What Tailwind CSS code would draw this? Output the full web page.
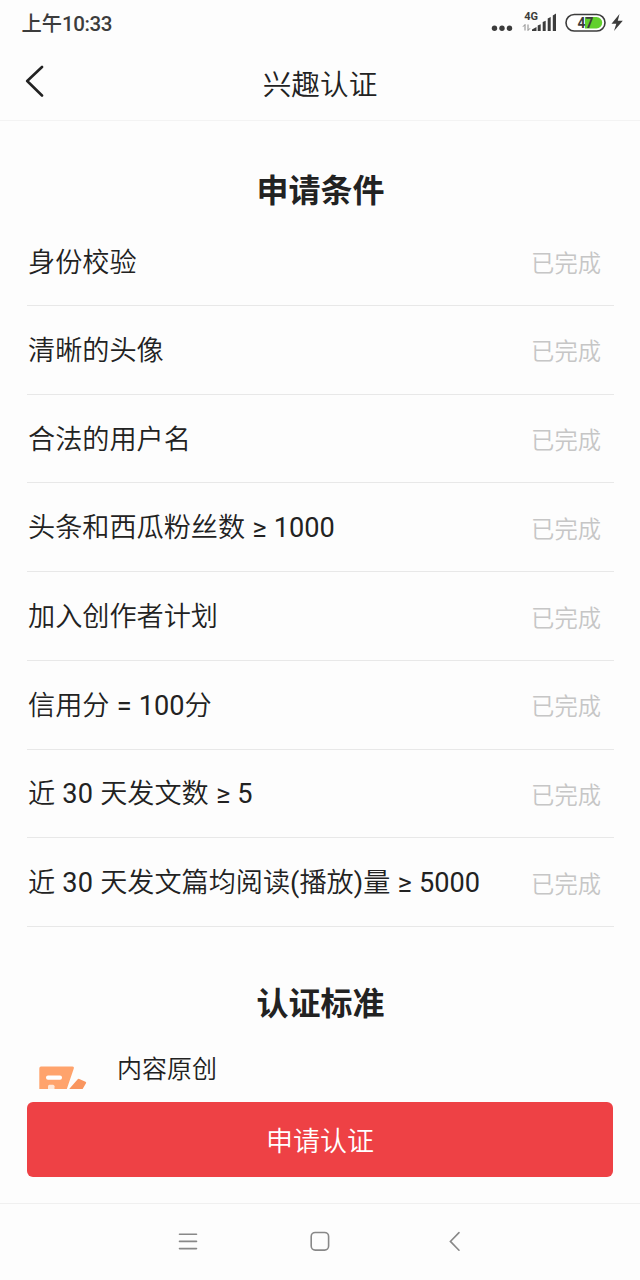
<!DOCTYPE html>
<html lang="zh-CN">
  <head>
    <meta charset="UTF-8" />
    <meta name="viewport" content="width=device-width, initial-scale=1.0" />
    <title>兴趣认证</title>
    <script src="https://cdn.jsdelivr.net/npm/@tailwindcss/browser@4"></script>
  </head>
  <body class="w-[640px] h-[1280px] overflow-hidden flex flex-col bg-[#fdfdfd] text-[#222] font-['Roboto','Noto_Sans_CJK_SC',sans-serif]">

    <!-- status bar -->
    <div class="h-[46px] shrink-0 flex items-center justify-between pl-[21.5px] pr-4 text-[#3c3c3c]">
      <span class="pt-0.5 text-[20.3px] font-medium leading-none">上午<span class="text-[20.5px] tracking-[-0.4px]">10:33</span></span>
      <svg class="w-[134px] h-[46px]" viewBox="490 0 134 46" fill="#3c3c3c">
        <circle cx="494.5" cy="28.3" r="2.7" />
        <circle cx="502" cy="28.3" r="2.7" />
        <circle cx="509.5" cy="28.3" r="2.7" />
        <text x="524.3" y="19.8" font-size="10.5" font-weight="700" font-family="Roboto" textLength="13.8" lengthAdjust="spacingAndGlyphs">4G</text>
        <path d="M525 30.500v-6l-2 2.200M528 24.500v6l2-2.200" fill="none" stroke="#888" stroke-width="1" />
        <path d="M532 31v-1.500l4.500-2.500V31zM537.700 31v-5.500l3-1.200V31zM542.700 31v-9l3-1.200V31zM547.700 31V18.500l3-1.500V31zM552.800 31V15.500l3.200-2V31z" />
        <rect x="566" y="14.500" width="39" height="16.500" rx="8.200" fill="#fff" stroke="#3c3c3c" stroke-width="1.600" />
        <path d="M585 17h11.500a5.700 5.700 0 0 1 0 11.400H585z" fill="#62d02c" />
        <text x="577.500" y="28" font-size="14.500" font-weight="700" font-family="Roboto" textLength="15.800" lengthAdjust="spacingAndGlyphs">47</text>
        <path d="M619.500 14l-8 9.800h4.800l-2.300 7.200 8.800-10.200h-5z" />
      </svg>
    </div>

    <!-- title bar -->
    <header class="h-[75px] shrink-0 grid grid-cols-[80px_1fr_80px] items-center border-b border-[#f3f3f3]">
      <svg class="w-5 h-8 ml-6 -mt-1" viewBox="0 0 20 32" fill="none" stroke="#222" stroke-width="2.600" stroke-linecap="round" stroke-linejoin="round">
        <path d="M18 2L3.200 16 18 30.500" />
      </svg>
      <h1 class="pt-1 text-center text-[28.7px] leading-none font-[350]">兴趣认证</h1>
    </header>

    <main class="flex-1 min-h-0 overflow-hidden pl-[27px] pr-[26px]">
      <h2 class="h-[96.4px] pt-[46px] text-center text-[32px] leading-[48px] font-bold">申请条件</h2>

      <ul class="text-[27.15px] font-[350] [word-spacing:0.5px]">
        <li class="h-[88.7px] flex items-center justify-between border-b border-[#e8e8e8] pl-px pr-[13px]">
          <span class="pt-[4px]">身份校验</span>
          <span class="pt-[6px] text-[23.3px] text-[#c6c6c6]">已完成</span>
        </li>
        <li class="h-[88.7px] flex items-center justify-between border-b border-[#e8e8e8] pl-px pr-[13px]">
          <span class="pt-[3px]">清晰的头像</span>
          <span class="pt-[6px] text-[23.3px] text-[#c6c6c6]">已完成</span>
        </li>
        <li class="h-[88.7px] flex items-center justify-between border-b border-[#e8e8e8] pl-px pr-[13px]">
          <span class="pt-[4px]">合法的用户名</span>
          <span class="pt-[6px] text-[23.3px] text-[#c6c6c6]">已完成</span>
        </li>
        <li class="h-[88.7px] flex items-center justify-between border-b border-[#e8e8e8] pl-px pr-[13px]">
          <span class="pt-[3px]">头条和西瓜粉丝数<span class="font-normal"> ≥ 1000</span></span>
          <span class="pt-[6px] text-[23.3px] text-[#c6c6c6]">已完成</span>
        </li>
        <li class="h-[88.7px] flex items-center justify-between border-b border-[#e8e8e8] pl-px pr-[13px]">
          <span class="pt-[3px]">加入创作者计划</span>
          <span class="pt-[6px] text-[23.3px] text-[#c6c6c6]">已完成</span>
        </li>
        <li class="h-[88.7px] flex items-center justify-between border-b border-[#e8e8e8] pl-px pr-[13px]">
          <span class="pt-[3px]">信用分<span class="font-normal"> = 100</span>分</span>
          <span class="pt-[6px] text-[23.3px] text-[#c6c6c6]">已完成</span>
        </li>
        <li class="h-[88.7px] flex items-center justify-between border-b border-[#e8e8e8] pl-px pr-[13px]">
          <span class="pt-[3px]">近<span class="font-normal"> 30 </span>天发文数<span class="font-normal"> ≥ 5</span></span>
          <span class="pt-[6px] text-[23.3px] text-[#c6c6c6]">已完成</span>
        </li>
        <li class="h-[88.7px] flex items-center justify-between border-b border-[#e8e8e8] pl-px pr-[13px]">
          <span class="pt-[3px]">近<span class="font-normal"> 30 </span>天发文篇均阅读<span class="font-normal">(</span>播放<span class="font-normal">)</span>量<span class="font-normal"> ≥ 5000</span></span>
          <span class="pt-[6px] text-[23.3px] text-[#c6c6c6]">已完成</span>
        </li>
      </ul>

      <h2 class="h-[125px] pt-[53px] text-center text-[32px] leading-[48px] font-bold">认证标准</h2>

      <div class="flex">
        <svg class="w-[50px] h-[38px] ml-[11px] mt-[14px]" viewBox="38 1066 50 38">
          <path d="M41 1066.500h31.500q2 0 1.300 2l-7 20.500H39.300v-20.500q0-2 1.700-2z" fill="#ffa36c" />
          <rect x="46" y="1075.500" width="16" height="4.200" rx="2" fill="#fff" />
          <rect x="48" y="1084.800" width="6.500" height="5" rx="1.500" fill="#ffe8da" />
          <path d="M77.500 1079.500q.7-1 1.800-.5l6.200 2.700q1 .5.500 1.500l-3.500 6H69z" fill="#f99660" />
        </svg>
        <span class="ml-[29px] text-[25px] leading-[36px] font-[350]">内容原创</span>
      </div>
    </main>

    <footer class="h-[115px] shrink-0 px-[27px] pt-[13px] bg-[#fdfdfd] border-b border-[#f0f0f0]">
      <button class="block w-[586px] h-[75px] pt-[5px] rounded-[6px] bg-[#ee4145] text-white text-[27px] font-[350]">申请认证</button>
    </footer>

    <!-- system navigation -->
    <nav class="h-[76px] shrink-0">
      <svg class="w-full h-full" viewBox="0 1204 640 76" fill="none" stroke="#888" stroke-width="1.600" stroke-linecap="round">
        <path d="M179.500 1234.200h17M179.500 1241.400h17M179.500 1248.600h17" />
        <rect x="311.200" y="1232.500" width="17.400" height="17.600" rx="4" />
        <path d="M459 1232.600l-8.600 8.800 8.600 8.800" />
      </svg>
    </nav>

  </body>
</html>
